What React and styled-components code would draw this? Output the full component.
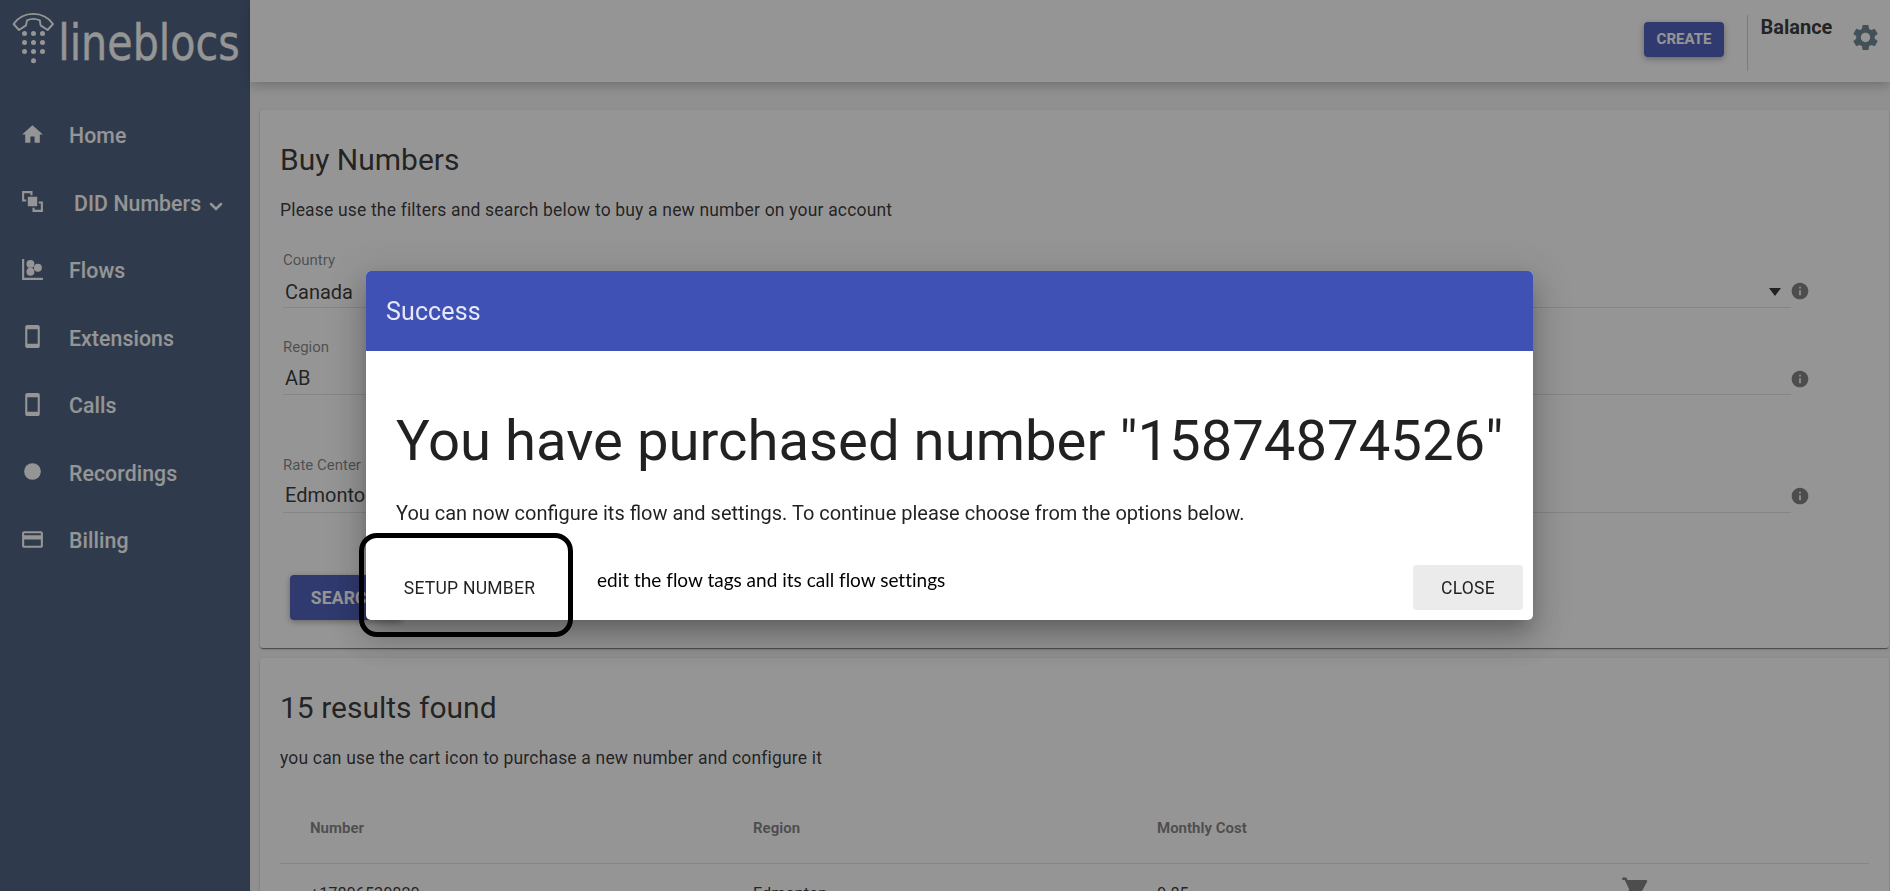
import React from "react";
import styled, { createGlobalStyle, css } from "styled-components";
import {
  MdHome,
  MdStayCurrentPortrait,
  MdFiberManualRecord,
  MdPayment,
  MdSettings,
  MdInfo,
  MdShoppingCart,
} from "react-icons/md";

const Global = createGlobalStyle`
  *, *::before, *::after { box-sizing: border-box; }
  html, body { margin: 0; height: 100%; overflow: hidden; }
  body {
    font-family: Roboto, "Liberation Sans", sans-serif;
    font-size: 17.5px;
    color: rgba(0, 0, 0, 0.87);
    background: #f5f5f5;
  }
  h1, h2, p { margin: 0; font-weight: 400; }
  svg { display: block; flex: none; }
`;

const Shell = styled.div`
  display: flex;
  width: 100vw;
  height: 100vh;
  overflow: hidden;
`;

const Sidebar = styled.aside`
  flex: none;
  width: 250px;
  background: #3c5376;
  color: #fff;
`;

const Brand = styled.div`
  height: 102.5px;
  padding: 5px 0 0 5px;
`;

const NavItem = styled.a`
  display: flex;
  align-items: center;
  height: 67.5px;
  padding-left: 20px;
  font-size: 21.25px;
  font-weight: 500;
  line-height: 24px;
  letter-spacing: 0.004em;
`;

const NavIcon = styled.span`
  display: flex;
  width: 49px;
  padding-bottom: 4px;
`;

const NavLabel = styled.span`
  padding-left: ${(p) => (p.$indent ? 5 : 0)}px;
`;

const Caret = styled.svg`
  margin: 6px 0 0 8px;
`;

const Main = styled.div`
  flex: 1;
  min-width: 0;
  display: flex;
  flex-direction: column;
`;

const TopBar = styled.header`
  flex: none;
  height: 82px;
  display: flex;
  justify-content: flex-end;
  background: #fff;
  box-shadow: 0 2px 12px rgba(0, 0, 0, 0.3);
`;

const raised = css`
  background: #3f51b5;
  color: #fff;
  font-weight: 700;
  border-radius: 4px;
  box-shadow: 0 2px 6px rgba(0, 0, 0, 0.35);
`;

const CreateButton = styled.button`
  ${raised}
  width: 80px;
  height: 35px;
  margin-top: 22px;
  padding: 0 0 2px;
  border: 0;
  font-family: inherit;
  font-size: 15px;
`;

const BalanceBlock = styled.div`
  width: 86px;
  height: 56px;
  margin: 15px 0 0 23px;
  padding: 2px 0 0 12.5px;
  border-left: 1px solid #cfcfcf;
  font-size: 20px;
  font-weight: 700;
  line-height: 20px;
  color: rgba(0, 0, 0, 0.87);
`;

const Gear = styled.span`
  margin: 22px 9px 0 17px;
  color: #607d8b;
`;

const Content = styled.main`
  flex: 1;
  min-height: 0;
  display: flex;
  flex-direction: column;
  gap: 10px;
  padding: 28px 1px 0 10px;
`;

const Card = styled.section`
  flex: none;
  height: ${(p) => p.$h}px;
  padding: 30px 20px 0;
  border-radius: 3px;
  background: #fff;
  box-shadow: 0 1px 3px rgba(0, 0, 0, 0.2), 0 1px 1px rgba(0, 0, 0, 0.14),
    0 2px 1px -1px rgba(0, 0, 0, 0.4);
`;

const Headline = styled.h2`
  font-size: 30px;
  line-height: 40px;
`;

const Lead = styled.p`
  margin-top: 19px;
  font-size: 17.5px;
  line-height: 22px;
  letter-spacing: 0.01em;
`;

const Field = styled.div`
  display: flex;
  align-items: flex-start;
  margin: ${(p) => p.$gap}px 0 0 3px;
  height: 58px;
`;

const FieldBody = styled.div`
  width: 1508px;
  height: 58px;
  border-bottom: 1px solid rgba(0, 0, 0, 0.12);
`;

const FieldLabel = styled.div`
  font-size: 15px;
  line-height: 20px;
  color: rgba(0, 0, 0, 0.54);
`;

const FieldValue = styled.div`
  display: flex;
  justify-content: space-between;
  align-items: center;
  padding: 0 10px 0 2px;
  margin-top: ${(p) => p.$top}px;
  font-size: 20px;
  line-height: 24px;
`;

const DropArrow = styled.span`
  border: 6.5px solid transparent;
  border-top: 8px solid rgba(0, 0, 0, 0.87);
  border-bottom: 0;
`;

const Hint = styled.span`
  margin: ${(p) => p.$top}px 0 0 -1.5px;
  color: #757575;
`;

const SearchButton = styled.button`
  ${raised}
  width: 112px;
  height: 45px;
  margin: 62px 0 0 10px;
  padding: 0 2px 0 0;
  border: 0;
  font-family: inherit;
  font-size: 17.5px;
  letter-spacing: 0.01em;
`;

const Row = styled.div`
  display: grid;
  grid-template-columns: 443px 404px 464px 1fr;
  align-items: center;
  padding-left: 30px;
  height: ${(p) => (p.$head ? 71 : 60)}px;
  font-size: ${(p) => (p.$head ? 15 : 16.25)}px;
  font-weight: ${(p) => (p.$head ? 700 : 400)};
  color: ${(p) => (p.$head ? "rgba(0,0,0,0.54)" : "rgba(0,0,0,0.87)")};
  border-bottom: 1px solid rgba(0, 0, 0, 0.12);
`;

const Table = styled.div`
  margin-top: 24px;
`;

const CartIcon = styled(MdShoppingCart)`
  margin-bottom: 7px;
  color: #757575;
`;

const Backdrop = styled.div`
  position: fixed;
  inset: 0;
  background: rgba(33, 33, 33, 0.48);
`;

const Dialog = styled.div`
  position: fixed;
  left: 366px;
  top: 271px;
  width: 1167px;
  height: 349px;
  display: flex;
  flex-direction: column;
  border-radius: 5px;
  overflow: hidden;
  background: #fff;
  box-shadow: 0 9px 19px -5px rgba(0, 0, 0, 0.2),
    0 19px 30px 2px rgba(0, 0, 0, 0.14), 0 8px 38px 6px rgba(0, 0, 0, 0.12);
`;

const DialogBar = styled.div`
  flex: none;
  height: 80px;
  display: flex;
  align-items: center;
  padding-left: 20px;
  background: #3f51b5;
  color: rgba(255, 255, 255, 0.87);
  font-size: 25px;
  letter-spacing: 0.005em;
`;

const DialogBody = styled.div`
  flex: 1;
  padding: 57px 0 0 30px;
`;

const DialogTitle = styled.h1`
  font-size: 56.25px;
  line-height: 66px;
  white-space: nowrap;
`;

const DialogText = styled.p`
  margin-top: 28px;
  font-size: 20px;
  line-height: 22px;
  white-space: nowrap;
`;

const DialogActions = styled.div`
  flex: none;
  display: flex;
  align-items: center;
  justify-content: space-between;
  height: 65px;
  padding: 0 10px;
`;

const FlatButton = styled.button`
  width: ${(p) => p.$w}px;
  height: 45px;
  padding: 0;
  border: 0;
  border-radius: 4px;
  background: ${(p) => (p.$focused ? "#ebebeb" : "transparent")};
  color: rgba(0, 0, 0, 0.87);
  font-family: inherit;
  font-size: 17.5px;
  letter-spacing: 0.014em;
`;

const Highlight = styled.div`
  position: fixed;
  left: 359px;
  top: 533px;
  width: 214px;
  height: 104px;
  border: 5px solid #000;
  border-radius: 18px;
`;

const Note = styled.div`
  position: fixed;
  left: 597px;
  top: 566px;
  font-family: Lato, sans-serif;
  font-size: 19px;
  line-height: 28px;
  font-variant-ligatures: none;
  color: #000;
  white-space: nowrap;
`;

function Logo() {
  return (
    <svg width="240" height="72" viewBox="5 5 240 72" fill="none" overflow="visible">
      <path
        d="M13.6 24 C23 10.5 43.5 10.5 53 24 L47.6 30 L40.6 25.4 L39.8 20.4 Q33.4 17.4 27 20.4 L26 25.4 L19 30 Z"
        stroke="#fff"
        strokeWidth="1.9"
        strokeLinejoin="round"
      />
      <g fill="#fff">
        {[33.5, 42.5, 51.5].map((y) =>
          [24.5, 33.5, 42.5].map((x) => <circle key={x + "-" + y} cx={x} cy={y} r="2.5" />)
        )}
        <circle cx="33.5" cy="60.8" r="2.5" />
      </g>
      <text
        x="58.2"
        y="59.7"
        fill="#fff"
        stroke="#fff"
        strokeWidth="0.4"
        fontFamily='"DejaVu Sans", sans-serif'
        fontSize="49.5"
        textLength="181.5"
        lengthAdjust="spacingAndGlyphs"
      >
        lineblocs
      </text>
    </svg>
  );
}

function NumbersIcon() {
  return (
    <svg width="25" height="25" viewBox="0 0 24 24" fill="currentColor">
      <path d="M7.5 7.5h9v9h-9zM2 2h10v4h-2V4H4v6h2v2H2zM22 22H12v-4h2v2h6v-6h-2v-2h4z" />
    </svg>
  );
}

function FlowsIcon() {
  return (
    <svg width="25" height="25" viewBox="0 0 24 24" fill="currentColor">
      <path d="M2 2h2v18h18v2H2z" />
      <circle cx="10" cy="6.6" r="3.8" />
      <circle cx="10" cy="14.2" r="3.8" />
      <circle cx="17.2" cy="10.4" r="3.8" />
    </svg>
  );
}

const NAV = [
  { label: "Home", icon: <MdHome size={25} /> },
  { label: "DID Numbers", icon: <NumbersIcon />, menu: true },
  { label: "Flows", icon: <FlowsIcon /> },
  { label: "Extensions", icon: <MdStayCurrentPortrait size={25} /> },
  { label: "Calls", icon: <MdStayCurrentPortrait size={25} /> },
  { label: "Recordings", icon: <MdFiberManualRecord size={25} /> },
  { label: "Billing", icon: <MdPayment size={25} /> },
];

const FIELDS = [
  { label: "Country", value: "Canada", gap: 29, top: 10, hint: 31, arrow: true },
  { label: "Region", value: "AB", gap: 29, top: 9, hint: 32 },
  { label: "Rate Center", value: "Edmonton", gap: 60, top: 8, hint: 31 },
];

export default function App() {
  return (
    <>
      <Global />
      <Shell>
        <Sidebar>
          <Brand>
            <Logo />
          </Brand>
          {NAV.map((n) => (
            <NavItem key={n.label}>
              <NavIcon>{n.icon}</NavIcon>
              <NavLabel $indent={n.menu}>{n.label}</NavLabel>
              {n.menu && (
                <Caret
                  width="14"
                  height="9"
                  viewBox="0 0 14 9"
                  fill="none"
                  stroke="currentColor"
                  strokeWidth="2.5"
                  strokeLinecap="round"
                >
                  <path d="M2 2l5 5 5-5" />
                </Caret>
              )}
            </NavItem>
          ))}
        </Sidebar>
        <Main>
          <TopBar>
            <CreateButton>CREATE</CreateButton>
            <BalanceBlock>Balance</BalanceBlock>
            <Gear>
              <MdSettings size={31} />
            </Gear>
          </TopBar>
          <Content>
            <Card $h={538}>
              <Headline>Buy Numbers</Headline>
              <Lead>Please use the filters and search below to buy a new number on your account</Lead>
              {FIELDS.map((f) => (
                <Field key={f.label} $gap={f.gap}>
                  <FieldBody>
                    <FieldLabel>{f.label}</FieldLabel>
                    <FieldValue $top={f.top}>
                      {f.value}
                      {f.arrow && <DropArrow />}
                    </FieldValue>
                  </FieldBody>
                  <Hint $top={f.hint}>
                    <MdInfo size={20} />
                  </Hint>
                </Field>
              ))}
              <SearchButton>SEARCH</SearchButton>
            </Card>
            <Card $h={400}>
              <Headline>15 results found</Headline>
              <Lead>you can use the cart icon to purchase a new number and configure it</Lead>
              <Table>
                <Row $head>
                  <span>Number</span>
                  <span>Region</span>
                  <span>Monthly Cost</span>
                </Row>
                <Row>
                  <span>+17806530820</span>
                  <span>Edmonton</span>
                  <span>0.85</span>
                  <CartIcon size={30} />
                </Row>
              </Table>
            </Card>
          </Content>
        </Main>
      </Shell>
      <Backdrop />
      <Dialog>
        <DialogBar>Success</DialogBar>
        <DialogBody>
          <DialogTitle>You have purchased number "15874874526"</DialogTitle>
          <DialogText>
            You can now configure its flow and settings. To continue please choose from the options below.
          </DialogText>
        </DialogBody>
        <DialogActions>
          <FlatButton $w={187}>SETUP NUMBER</FlatButton>
          <FlatButton $w={110} $focused>
            CLOSE
          </FlatButton>
        </DialogActions>
      </Dialog>
      <Highlight />
      <Note>edit the flow tags and its call flow settings</Note>
    </>
  );
}
